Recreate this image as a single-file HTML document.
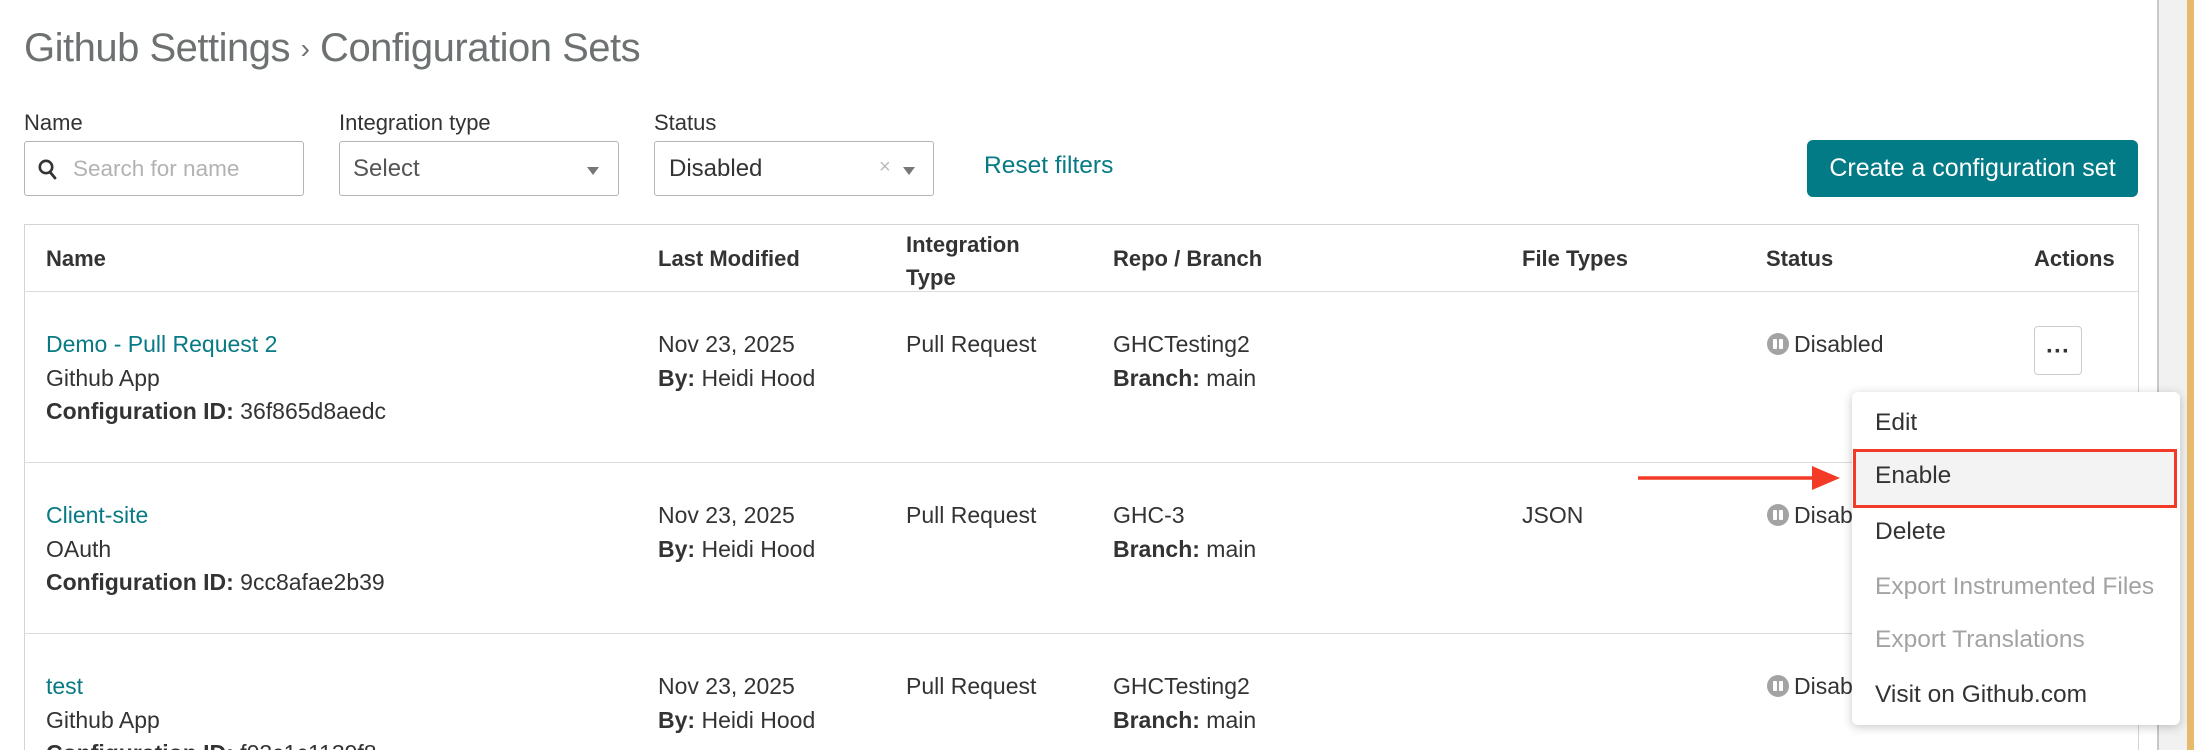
<!DOCTYPE html>
<html style="width:2194px;height:750px;overflow:hidden"><head><meta charset="utf-8"><style>
*{box-sizing:border-box;margin:0;padding:0}
body{width:2194px;height:750px;overflow:hidden;background:#fff;font-family:"Liberation Sans",sans-serif;color:#333;position:relative}
.a{position:absolute;white-space:nowrap}
.title{left:24px;top:26px;font-size:40px;color:#6d7172;letter-spacing:-0.5px}
.lbl{font-size:22px;color:#333;top:110px}
.inp{position:absolute;top:141px;height:55px;border:1px solid #b5b5b5;border-radius:3px;width:280px}
.t{font-size:23px;color:#333}
.b{font-weight:bold}
.h{font-size:22px;font-weight:bold;color:#333}
.lnk{color:#077a84}
.hl{position:absolute;left:24px;width:2114px;height:1px;background:#dcdcdc}
.ico{display:inline-block;width:22px;height:22px;border-radius:50%;background:#a3a3a3;position:relative;vertical-align:-3px;margin-right:5px}
.ico:before,.ico:after{content:"";position:absolute;top:6px;width:4px;height:10px;background:#fff;border-radius:1px}
.ico:before{left:6px}.ico:after{left:12px}
.mi{position:absolute;left:1875px;font-size:24.5px;color:#333}
</style></head><body>
<div class="a title">Github Settings <span style="font-size:28px;position:relative;top:-3px">›</span> Configuration Sets</div>

<div class="a lbl" style="left:24px">Name</div>
<div class="a lbl" style="left:339px">Integration type</div>
<div class="a lbl" style="left:654px">Status</div>

<div class="inp" style="left:24px">
 <svg class="a" style="left:13px;top:17px" width="20" height="22" viewBox="0 0 20 22"><circle cx="8" cy="8" r="6.2" fill="none" stroke="#333" stroke-width="2.6"/><path d="M12 13 L17 19" stroke="#333" stroke-width="2.8" stroke-linecap="round"/></svg>
 <div class="a" style="left:48px;top:14px;font-size:22.5px;color:#b2b2b2">Search for name</div>
</div>
<div class="inp" style="left:339px">
 <div class="a" style="left:13px;top:13px;font-size:24px;color:#555">Select</div>
 <div class="a" style="left:247px;top:25px;width:0;height:0;border-left:6px solid transparent;border-right:6px solid transparent;border-top:8px solid #777"></div>
</div>
<div class="inp" style="left:654px">
 <div class="a" style="left:14px;top:13px;font-size:24px;color:#333">Disabled</div>
 <div class="a" style="left:224px;top:14px;font-size:20px;color:#bbb">×</div>
 <div class="a" style="left:248px;top:25px;width:0;height:0;border-left:6px solid transparent;border-right:6px solid transparent;border-top:8px solid #777"></div>
</div>
<div class="a lnk" style="left:984px;top:152px;font-size:24.5px">Reset filters</div>

<div class="a" style="left:1807px;top:140px;width:331px;height:57px;background:#037b86;border-radius:6px;color:#fff;font-size:25px;text-align:center;line-height:57px">Create a configuration set</div>

<div class="a" style="left:24px;top:224px;width:2115px;height:526px;border:1px solid #d4d4d4;border-bottom:none"></div>
<div class="hl" style="top:291px"></div>
<div class="hl" style="top:462px"></div>
<div class="hl" style="top:633px"></div>

<div class="a h" style="left:46px;top:246px">Name</div>
<div class="a h" style="left:658px;top:246px">Last Modified</div>
<div class="a h" style="left:906px;top:228px;line-height:33px">Integration<br>Type</div>
<div class="a h" style="left:1113px;top:246px">Repo / Branch</div>
<div class="a h" style="left:1522px;top:246px">File Types</div>
<div class="a h" style="left:1766px;top:246px">Status</div>
<div class="a h" style="left:2034px;top:246px">Actions</div>

<!-- row1 -->
<div class="a t" style="left:46px;top:328px;line-height:33.5px"><span class="lnk">Demo - Pull Request 2</span><br>Github App<br><span class="b">Configuration ID:</span> 36f865d8aedc</div>
<div class="a t" style="left:658px;top:328px;line-height:33.5px">Nov 23, 2025<br><span class="b">By:</span> Heidi Hood</div>
<div class="a t" style="left:906px;top:328px;line-height:33.5px">Pull Request</div>
<div class="a t" style="left:1113px;top:328px;line-height:33.5px">GHCTesting2<br><span class="b">Branch:</span> main</div>
<div class="a t" style="left:1767px;top:328px;line-height:33.5px"><span class="ico"></span>Disabled</div>
<div class="a" style="left:2034px;top:326px;width:48px;height:49px;border:1px solid #ccc;border-radius:4px;text-align:center;font-weight:bold;font-size:24px;line-height:50px">···</div>

<!-- row2 -->
<div class="a t" style="left:46px;top:499px;line-height:33.5px"><span class="lnk">Client-site</span><br>OAuth<br><span class="b">Configuration ID:</span> 9cc8afae2b39</div>
<div class="a t" style="left:658px;top:499px;line-height:33.5px">Nov 23, 2025<br><span class="b">By:</span> Heidi Hood</div>
<div class="a t" style="left:906px;top:499px;line-height:33.5px">Pull Request</div>
<div class="a t" style="left:1113px;top:499px;line-height:33.5px">GHC-3<br><span class="b">Branch:</span> main</div>
<div class="a t" style="left:1522px;top:499px;line-height:33.5px">JSON</div>
<div class="a t" style="left:1767px;top:499px;line-height:33.5px"><span class="ico"></span>Disabled</div>

<!-- row3 -->
<div class="a t" style="left:46px;top:670px;line-height:33.5px"><span class="lnk">test</span><br>Github App<br><span class="b">Configuration ID:</span> f03c1c1139f8</div>
<div class="a t" style="left:658px;top:670px;line-height:33.5px">Nov 23, 2025<br><span class="b">By:</span> Heidi Hood</div>
<div class="a t" style="left:906px;top:670px;line-height:33.5px">Pull Request</div>
<div class="a t" style="left:1113px;top:670px;line-height:33.5px">GHCTesting2<br><span class="b">Branch:</span> main</div>
<div class="a t" style="left:1767px;top:670px;line-height:33.5px"><span class="ico"></span>Disabled</div>

<!-- scrollbar -->
<div class="a" style="left:2157px;top:0;width:37px;height:750px;background:#f1f1f1;border-left:2px solid #c8c8c8"></div>
<div class="a" style="left:2187px;top:0;width:7px;height:750px;background:#e8b96a"></div>

<!-- menu -->
<div class="a" style="left:1852px;top:392px;width:328px;height:333px;background:#fff;border-radius:6px;box-shadow:0 2px 10px rgba(0,0,0,.22)"></div>
<div class="a" style="left:1853px;top:449px;width:324px;height:59px;background:#f3f3f3;border:3px solid #f23a26"></div>
<div class="mi" style="top:409px">Edit</div>
<div class="mi" style="top:462px">Enable</div>
<div class="mi" style="top:518px">Delete</div>
<div class="mi" style="top:573px;color:#a3a3a3">Export Instrumented Files</div>
<div class="mi" style="top:626px;color:#a3a3a3">Export Translations</div>
<div class="mi" style="top:681px">Visit on Github.com</div>

<!-- arrow -->
<svg class="a" style="left:1636px;top:464px" width="210" height="28" viewBox="0 0 210 28"><line x1="2" y1="14" x2="180" y2="14" stroke="#f23a26" stroke-width="3.5"/><polygon points="176,2 204,14 176,26" fill="#f23a26"/></svg>
</body></html>
